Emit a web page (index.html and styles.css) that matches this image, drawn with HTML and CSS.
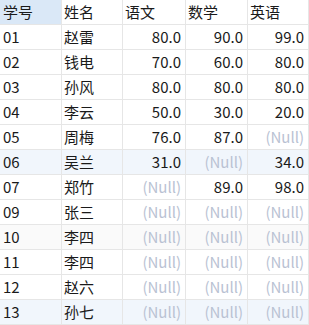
FILE: index.html
```html
<!DOCTYPE html>
<html lang="zh">
<head>
<meta charset="utf-8">
<link rel="stylesheet" href="styles.css">
</head>
<body>
<div class="grid">
  <div class="row head">
    <div class="cell c1 sel">学号</div><div class="cell c2">姓名</div><div class="cell c3">语文</div><div class="cell c4">数学</div><div class="cell c5">英语</div>
  </div>
  <div class="row">
    <div class="cell c1">01</div><div class="cell c2">赵雷</div><div class="cell c3 num">80.0</div><div class="cell c4 num">90.0</div><div class="cell c5 num">99.0</div>
  </div>
  <div class="row">
    <div class="cell c1">02</div><div class="cell c2">钱电</div><div class="cell c3 num">70.0</div><div class="cell c4 num">60.0</div><div class="cell c5 num">80.0</div>
  </div>
  <div class="row">
    <div class="cell c1">03</div><div class="cell c2">孙风</div><div class="cell c3 num">80.0</div><div class="cell c4 num">80.0</div><div class="cell c5 num">80.0</div>
  </div>
  <div class="row">
    <div class="cell c1">04</div><div class="cell c2">李云</div><div class="cell c3 num">50.0</div><div class="cell c4 num">30.0</div><div class="cell c5 num">20.0</div>
  </div>
  <div class="row">
    <div class="cell c1">05</div><div class="cell c2">周梅</div><div class="cell c3 num">76.0</div><div class="cell c4 num">87.0</div><div class="cell c5 num null">(Null)</div>
  </div>
  <div class="row hl">
    <div class="cell c1">06</div><div class="cell c2">吴兰</div><div class="cell c3 num">31.0</div><div class="cell c4 num null">(Null)</div><div class="cell c5 num">34.0</div>
  </div>
  <div class="row">
    <div class="cell c1">07</div><div class="cell c2">郑竹</div><div class="cell c3 num null">(Null)</div><div class="cell c4 num">89.0</div><div class="cell c5 num">98.0</div>
  </div>
  <div class="row">
    <div class="cell c1">09</div><div class="cell c2">张三</div><div class="cell c3 num null">(Null)</div><div class="cell c4 num null">(Null)</div><div class="cell c5 num null">(Null)</div>
  </div>
  <div class="row alt">
    <div class="cell c1">10</div><div class="cell c2">李四</div><div class="cell c3 num null">(Null)</div><div class="cell c4 num null">(Null)</div><div class="cell c5 num null">(Null)</div>
  </div>
  <div class="row">
    <div class="cell c1">11</div><div class="cell c2">李四</div><div class="cell c3 num null">(Null)</div><div class="cell c4 num null">(Null)</div><div class="cell c5 num null">(Null)</div>
  </div>
  <div class="row">
    <div class="cell c1">12</div><div class="cell c2">赵六</div><div class="cell c3 num null">(Null)</div><div class="cell c4 num null">(Null)</div><div class="cell c5 num null">(Null)</div>
  </div>
  <div class="row hl">
    <div class="cell c1">13</div><div class="cell c2">孙七</div><div class="cell c3 num null">(Null)</div><div class="cell c4 num null">(Null)</div><div class="cell c5 num null">(Null)</div>
  </div>
</div>
</body>
</html>
```
FILE: styles.css
```css
html, body {
  margin: 0;
  padding: 0;
  background: #ffffff;
}
.grid {
  display: flex;
  flex-direction: column;
  width: 309px;
  font-family: "Noto Sans CJK SC", "Noto Sans", sans-serif;
  font-size: 15px;
  color: #1a1a1a;
}
.row {
  display: flex;
  height: 25px;
}
.row.hl {
  background: #f1f6fc;
}
.row.alt {
  background: #fafafa;
}
.cell {
  box-sizing: border-box;
  height: 25px;
  border-right: 1px solid #e6e6e6;
  border-bottom: 1px solid #e6e6e6;
  padding: 0 4px 0 3px;
  line-height: 24px;
  white-space: nowrap;
  overflow: hidden;
}
.c1 { width: 62px; }
.c2 { width: 61px; padding-left: 2px; }
.c3 { width: 63px; }
.c4 { width: 62px; }
.c5 { width: 61px; }
.head .c3, .head .c4, .head .c5 { padding-left: 2px; }
.sel {
  background: #dae8f7;
}
.num {
  text-align: right;
}
.null {
  color: #b9c2d3;
}
```
